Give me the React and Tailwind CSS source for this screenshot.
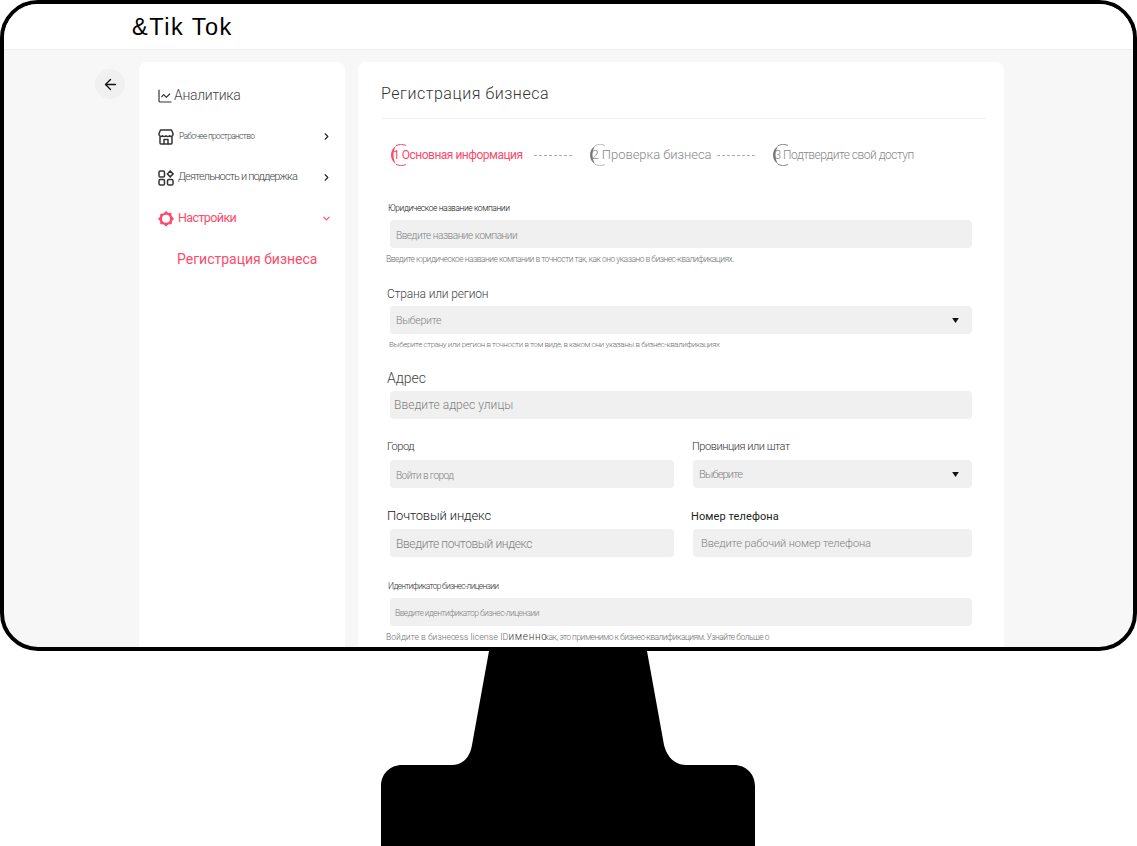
import { ArrowLeft, ChartLine, ChevronDown, ChevronRight } from 'lucide-react';

const font = { fontFamily: 'Roboto, "Liberation Sans", sans-serif' };

const StoreIcon = () => (
  <svg width="16" height="16" viewBox="0 0 16 16" fill="none" stroke="#333" strokeWidth="1.5" strokeLinejoin="round" className="shrink-0">
    <path d="M2.500 1h11L15 4.500v1a2 2 0 0 1-3.500 1.200 2.400 2.400 0 0 1-3.500 0 2.400 2.400 0 0 1-3.500 0A2 2 0 0 1 1 5.500v-1z" />
    <path d="M2 7.500V14a1 1 0 0 0 1 1h10a1 1 0 0 0 1-1V7.500" />
    <path d="M6 15v-4.500h4V15" />
  </svg>
);

const AppsIcon = () => (
  <svg width="16" height="16" viewBox="0 0 16 16" fill="none" stroke="#333" strokeWidth="1.5" className="shrink-0">
    <rect x="1" y="1" width="5.500" height="6" rx="1.300" />
    <rect x="1" y="9.500" width="5.500" height="5.500" rx="1.300" />
    <rect x="9.500" y="9.500" width="5.500" height="5.500" rx="1.300" />
    <path d="M12.200 1l2.800 2.900-2.800 2.900-2.800-2.900z" />
  </svg>
);

const GearIcon = () => (
  <svg width="16" height="16" viewBox="0 0 16 16" fill="none" className="shrink-0">
    <path
      fill="#fe4a6c"
      fillRule="evenodd"
      d="M8 0l2.300 1.900 3-.2.300 3L16 7.900l-2 2.200-.3 3.100-3 .1L8 15.500l-2.600-2.200-3-.1-.4-3.100L0 7.900l2-2.200.4-3 3-.2zM8 3.800a4 4 0 1 0 0 8 4 4 0 0 0 0-8z"
    />
  </svg>
);

// thin crescent on the left, thin arcs above and below: the rest is covered by the label
const StepRing = ({ color, ring }) => (
  <svg width="22" height="22" viewBox="0 0 22 22" fill="none" className="shrink-0 -mr-[19px]">
    <path d="M6 2C2.800 3.800 1 7.200 1 11s1.800 7.200 5 9c-1.500-2.500-2.500-5.500-2.500-9S4.500 4.500 6 2z" fill={color} />
    <path d="M6 1.600a10.500 10.500 0 0 1 10-.2M6 20.400a10.500 10.500 0 0 0 10 .2" stroke={ring} strokeWidth="1" />
  </svg>
);

const Caret = () => (
  <svg width="7" height="5" viewBox="0 0 8 6" className="shrink-0">
    <path d="M0 0h8L4 6z" fill="#111" />
  </svg>
);

const Field = ({ children, className = '', textClass = 'pt-[2px]', select = false }) => (
  <div className={`h-7 bg-[#f0f0f0] rounded flex items-center justify-between text-[#808080] whitespace-nowrap ${className}`}>
    <span className={textClass}>{children}</span>
    {select && <span className="mr-[13px] flex"><Caret /></span>}
  </div>
);

const NavRow = ({ icon, children, className = '', right }) => (
  <div className={`h-[41px] flex items-center whitespace-nowrap ${className}`}>
    {icon}
    <span className="flex-1">{children}</span>
    {right}
  </div>
);

export default function App() {
  return (
    <div className="w-[1137px] h-[846px] bg-white overflow-hidden font-light" style={font}>
      <div className="h-[651px] border-4 border-black rounded-[38px] overflow-hidden flex flex-col bg-[#f7f7f7] box-border">
        <header className="h-[46px] shrink-0 bg-white border-b border-[#eeeeee] pl-[128px] pt-[8px]">
          <span className="text-[23.500px] leading-[30px] tracking-[1.500px] text-black font-normal" style={{ fontFamily: '"Liberation Sans", sans-serif' }}>&amp;Tik Tok</span>
        </header>

        <div className="flex-1 flex min-h-0 pt-3">
          <div className="w-[135px] shrink-0 pl-[91px] pt-[7px]">
            <div className="w-[30px] h-[30px] rounded-full bg-[#f0f0f0] flex items-center justify-center">
              <ArrowLeft size={17} color="#111" strokeWidth={1.800} />
            </div>
          </div>

          <aside className="w-[206px] shrink-0 bg-white rounded-t-lg pl-[18px] pr-[13px] pt-[13px]">
            <NavRow icon={<span className="mr-[1px] flex"><ChartLine size={16} color="#333" strokeWidth={1.800} /></span>} className="text-[14px] tracking-[-0.3px] text-[#444]">
              Аналитика
            </NavRow>
            <NavRow
              icon={<span className="mr-[5px] flex"><StoreIcon /></span>}
              className="text-[8.500px] tracking-[-0.7px] text-[#444] pl-[1px]"
              right={<ChevronRight size={11} color="#222" strokeWidth={2.400} />}
            >
              Рабочее пространство
            </NavRow>
            <NavRow
              icon={<span className="mr-[4px] flex"><AppsIcon /></span>}
              className="text-[11px] tracking-[-0.85px] text-[#444] pl-[1px]"
              right={<ChevronRight size={11} color="#222" strokeWidth={2.400} />}
            >
              Деятельность и поддержка
            </NavRow>
            <NavRow
              icon={<span className="mr-[4px] flex"><GearIcon /></span>}
              className="text-[12.500px] tracking-[-0.6px] text-[#fe4a6c] font-normal pl-[1px]"
              right={<ChevronDown size={11} color="#fe4a6c" strokeWidth={2.400} />}
            >
              Настройки
            </NavRow>
            <NavRow className="text-[14px] text-[#fe4a6c] pl-[20px] font-normal">Регистрация бизнеса</NavRow>
          </aside>

          <main className="w-[646px] shrink-0 ml-[13px] bg-white rounded-t-lg pl-[23px] pr-[18px]">
            <div className="h-[57px] border-b border-[#f0f0f0] flex items-center pt-[8px]">
              <h1 className="text-[16px] tracking-[0.55px] text-[#333] font-light">Регистрация бизнеса</h1>
            </div>

            <div className="flex items-center h-[22px] mt-[25px] pl-[9px]">
              <StepRing color="#fe4a6c" ring="#fe4a6c" />
              <span className="text-[12px] tracking-[-0.5px] text-[#fe4a6c] font-normal whitespace-nowrap">1 Основная информация</span>
              <span className="w-[38px] border-t border-dashed border-[#aaaaaa] ml-[11px] mr-[17px]" />
              <StepRing color="#777777" ring="#bbbbbb" />
              <span className="text-[13px] tracking-[-0.05px] text-[#888] whitespace-nowrap">2 Проверка бизнеса</span>
              <span className="w-[38px] border-t border-dashed border-[#aaaaaa] ml-[5px] mr-[17px]" />
              <StepRing color="#777777" ring="#888888" />
              <span className="text-[12px] tracking-[-0.5px] text-[#888] whitespace-nowrap">3 Подтвердите свой доступ</span>
            </div>

            <div className="text-[8.500px] tracking-[-0.42px] text-[#111] leading-3 mt-[36px] pl-[7px]">Юридическое название компании</div>
            <Field className="mt-[6px] ml-[9px] mr-[14px] text-[10px] tracking-[-0.43px] pl-[6px]">Введите название компании</Field>
            <div className="text-[8.500px] tracking-[-0.52px] text-[#707070] leading-3 mt-[5px] pl-[5px] whitespace-nowrap">
              Введите юридическое название компании в точности так, как оно указано в бизнес-квалификациях.
            </div>

            <div className="text-[12px] tracking-[-0.15px] text-[#444] leading-4 mt-[21px] pl-[6px]">Страна или регион</div>
            <Field select className="mt-[4px] ml-[9px] mr-[14px] text-[10.500px] tracking-[-0.25px] pl-[6px]">Выберите</Field>
            <div className="text-[8px] tracking-[-0.38px] text-[#707070] leading-3 mt-[5px] pl-[8px] whitespace-nowrap">
              Выберите страну или регион в точности в том виде, в каком они указаны в бизнес-квалификациях
            </div>

            <div className="text-[14px] text-[#444] leading-5 mt-[17px] pl-[6px]">Адрес</div>
            <Field textClass="" className="mt-[3px] ml-[9px] mr-[14px] text-[12px] tracking-[0.05px] pl-[4px]">Введите адрес улицы</Field>

            <div className="grid grid-cols-[293px_1fr] mt-[21px] pl-[6px] text-[#333] h-[13px] leading-[13px]">
              <span className="text-[11px] tracking-[-0.45px]">Город</span>
              <span className="text-[11px] tracking-[-0.45px] pl-[12px]">Провинция или штат</span>
            </div>
            <div className="grid grid-cols-[284px_279px] gap-x-[19px] mt-[7px] ml-[9px]">
              <Field className="text-[10px] tracking-[-0.55px] pl-[6px]">Войти в город</Field>
              <Field select className="text-[11px] tracking-[-0.8px] pl-[6px]">Выберите</Field>
            </div>

            <div className="grid grid-cols-[293px_1fr] mt-[21px] pl-[6px] text-[#222] h-[14px] leading-[14px]">
              <span className="text-[13px] tracking-[-0.15px]">Почтовый индекс</span>
              <span className="text-[11px] tracking-[0.1px] pl-[11px] pt-[1px] font-normal">Номер телефона</span>
            </div>
            <div className="grid grid-cols-[284px_279px] gap-x-[19px] mt-[6px] ml-[9px]">
              <Field className="text-[12px] tracking-[-0.37px] pl-[6px]">Введите почтовый индекс</Field>
              <Field className="text-[11px] tracking-[-0.1px] pl-[8px]">Введите рабочий номер телефона</Field>
            </div>

            <div className="text-[8.500px] tracking-[-0.73px] text-[#333] leading-3 mt-[23px] pl-[7px]">Идентификатор бизнес-лицензии</div>
            <Field className="mt-[6px] ml-[9px] mr-[14px] text-[8.500px] tracking-[-0.55px] pl-[5px]">Введите идентификатор бизнес-лицензии</Field>

            <div className="flex items-baseline whitespace-nowrap mt-[5px] pl-[5px] text-[8.500px] text-[#707070] leading-3">
              <span className="tracking-[0.05px]">Войдите в бизнес</span>
              <span className="-ml-[1px] text-[9px] tracking-[0px]">ess license ID</span>
              <span className="text-[10px] tracking-[0.7px] text-[#333]">именно</span>
              <span className="-ml-[3px] tracking-[-0.5px]">как, это применимо к бизнес-квалификациям. Узнайте больше о</span>
            </div>
          </main>
        </div>
      </div>

      <svg width="1137" height="195" viewBox="0 651 1137 195" className="block">
        <path
          d="M489 651L472 745C470 757 463 765 452 765H402C390 765 381 774 381 786V846H755V786C755 774 746 765 734 765H686C675 765 667 757 664 745L647 651Z"
          fill="#000"
        />
      </svg>
    </div>
  );
}
